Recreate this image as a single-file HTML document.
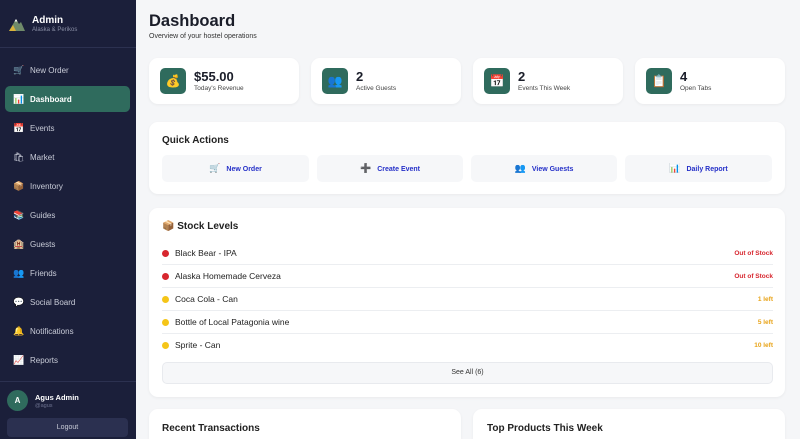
<!DOCTYPE html>
<html style="overflow:hidden;height:439px"><head><meta charset="utf-8"><style>
*{box-sizing:border-box;margin:0;padding:0}
body{width:800px;height:439px;overflow:hidden;background:#f5f6f8;font-family:"Liberation Sans","Noto Sans CJK SC",sans-serif;position:relative;color:#1a1d29}
.sb{position:absolute;left:0;top:0;width:136px;height:439px;background:#1b1f3a}
.abs{position:absolute}
.nav{position:absolute;left:5px;width:125px;height:26px;border-radius:5px;color:#c9ccd8;font-size:8px;line-height:26px;padding-left:8px;white-space:nowrap}
.nav span{display:inline-block;width:17px;font-size:9px}
.nav.act{background:#2f6b5d;color:#fff;font-weight:bold}
.card{position:absolute;background:#fff;border-radius:9px;box-shadow:0 1px 3px rgba(0,0,0,.05)}
.ic{position:absolute;left:11px;top:10px;width:26px;height:26px;border-radius:5px;background:#2f6b5d;text-align:center;line-height:26px;font-size:12px}
.v{position:absolute;left:45px;top:11px;font-size:13px;font-weight:bold}
.l{position:absolute;left:45px;top:27px;font-size:6.5px;color:#444}
.btn{position:absolute;top:155px;height:27px;background:#f6f7f9;border-radius:5px;text-align:center;line-height:27px;font-size:7px;font-weight:bold;color:#2530c8}
.btn i{font-style:normal;font-size:9px;margin-right:6px;color:#333}
.row{position:absolute;left:162px;width:611px;height:23px;border-bottom:1px solid #eceef1;font-size:8.5px;line-height:23px;padding-left:13px;color:#222}
.row b{position:absolute;left:0;top:8px;width:7px;height:7px;border-radius:50%}
.row em{position:absolute;right:0;font-style:normal;font-weight:bold;font-size:6.5px}
</style></head><body>
<div class="sb">
 <svg class="abs" style="left:9px;top:17px" width="16" height="14" viewBox="0 0 16 14"><polygon points="0,14 7,2 10,7 12,5 16,14" fill="#6f8a6a"/><polygon points="5.5,4.5 7,2 8.5,4.5" fill="#fff"/><polygon points="0,14 4,8 7,14" fill="#d9b23a"/></svg>
 <div class="abs" style="left:32px;top:15px;color:#fff;font-weight:bold;font-size:10px">Admin</div>
 <div class="abs" style="left:32px;top:27px;color:#8a8fa5;font-size:6px">Alaska &amp; Perikos</div>
 <div class="abs" style="left:0;top:47px;width:136px;height:1px;background:#2c3150"></div>
 <div class="nav" style="top:57px"><span>🛒</span>New Order</div>
 <div class="nav act" style="top:86px"><span>📊</span>Dashboard</div>
 <div class="nav" style="top:115px"><span>📅</span>Events</div>
 <div class="nav" style="top:144px"><span>🛍</span>Market</div>
 <div class="nav" style="top:173px"><span>📦</span>Inventory</div>
 <div class="nav" style="top:202px"><span>📚</span>Guides</div>
 <div class="nav" style="top:231px"><span>🏨</span>Guests</div>
 <div class="nav" style="top:260px"><span>👥</span>Friends</div>
 <div class="nav" style="top:289px"><span>💬</span>Social Board</div>
 <div class="nav" style="top:318px"><span>🔔</span>Notifications</div>
 <div class="nav" style="top:347px"><span>📈</span>Reports</div>
 <div class="abs" style="left:0;top:381px;width:136px;height:1px;background:#2c3150"></div>
 <div class="abs" style="left:7px;top:390px;width:21px;height:21px;border-radius:50%;background:#2f6b5d;color:#fff;font-size:8px;font-weight:bold;text-align:center;line-height:21px">A</div>
 <div class="abs" style="left:35px;top:393px;color:#fff;font-weight:bold;font-size:7.5px">Agus Admin</div>
 <div class="abs" style="left:35px;top:403px;color:#6d7290;font-size:5.5px">@agus</div>
 <div class="abs" style="left:7px;top:418px;width:121px;height:19px;border-radius:4px;background:#2b3050;color:#c9ccd8;font-size:7px;text-align:center;line-height:19px">Logout</div>
</div>
<div class="abs" style="left:149px;top:12px;font-size:16.5px;font-weight:bold">Dashboard</div>
<div class="abs" style="left:149px;top:33px;font-size:7px;color:#333">Overview of your hostel operations</div>

<div class="card" style="left:149px;top:58px;width:150px;height:46px"><div class="ic">💰</div><div class="v">$55.00</div><div class="l">Today's Revenue</div></div>
<div class="card" style="left:311px;top:58px;width:150px;height:46px"><div class="ic">👥</div><div class="v">2</div><div class="l">Active Guests</div></div>
<div class="card" style="left:473px;top:58px;width:150px;height:46px"><div class="ic">📅</div><div class="v">2</div><div class="l">Events This Week</div></div>
<div class="card" style="left:635px;top:58px;width:150px;height:46px"><div class="ic">📋</div><div class="v">4</div><div class="l">Open Tabs</div></div>

<div class="card" style="left:149px;top:122px;width:636px;height:72px"></div>
<div class="abs" style="left:162px;top:135px;font-size:10px;font-weight:bold;color:#222">Quick Actions</div>
<div class="btn" style="left:162px;width:147px"><i>🛒</i>New Order</div>
<div class="btn" style="left:317px;width:146px"><i>➕</i>Create Event</div>
<div class="btn" style="left:471px;width:146px"><i>👥</i>View Guests</div>
<div class="btn" style="left:625px;width:147px"><i>📊</i>Daily Report</div>

<div class="card" style="left:149px;top:208px;width:636px;height:189px"></div>
<div class="abs" style="left:162px;top:221px;font-size:10px;font-weight:bold;color:#222">📦 Stock Levels</div>
<div class="row" style="top:242px"><b style="background:#d7262e"></b>Black Bear - IPA<em style="color:#d7262e">Out of Stock</em></div>
<div class="row" style="top:265px"><b style="background:#d7262e"></b>Alaska Homemade Cerveza<em style="color:#d7262e">Out of Stock</em></div>
<div class="row" style="top:288px"><b style="background:#f5c518"></b>Coca Cola - Can<em style="color:#e8a317">1 left</em></div>
<div class="row" style="top:311px"><b style="background:#f5c518"></b>Bottle of Local Patagonia wine<em style="color:#e8a317">5 left</em></div>
<div class="row" style="top:334px;border-bottom:none"><b style="background:#f5c518"></b>Sprite - Can<em style="color:#e8a317">10 left</em></div>
<div class="abs" style="left:162px;top:362px;width:611px;height:22px;background:#f6f7f9;border:1px solid #e8eaee;border-radius:5px;text-align:center;line-height:20px;font-size:7px;color:#333">See All (6)</div>

<div class="card" style="left:149px;top:409px;width:312px;height:30px;border-radius:9px 9px 0 0"></div>
<div class="abs" style="left:162px;top:423px;font-size:10px;font-weight:bold;color:#222">Recent Transactions</div>
<div class="card" style="left:473px;top:409px;width:312px;height:30px;border-radius:9px 9px 0 0"></div>
<div class="abs" style="left:487px;top:423px;font-size:10px;font-weight:bold;color:#222">Top Products This Week</div>
</body></html>
